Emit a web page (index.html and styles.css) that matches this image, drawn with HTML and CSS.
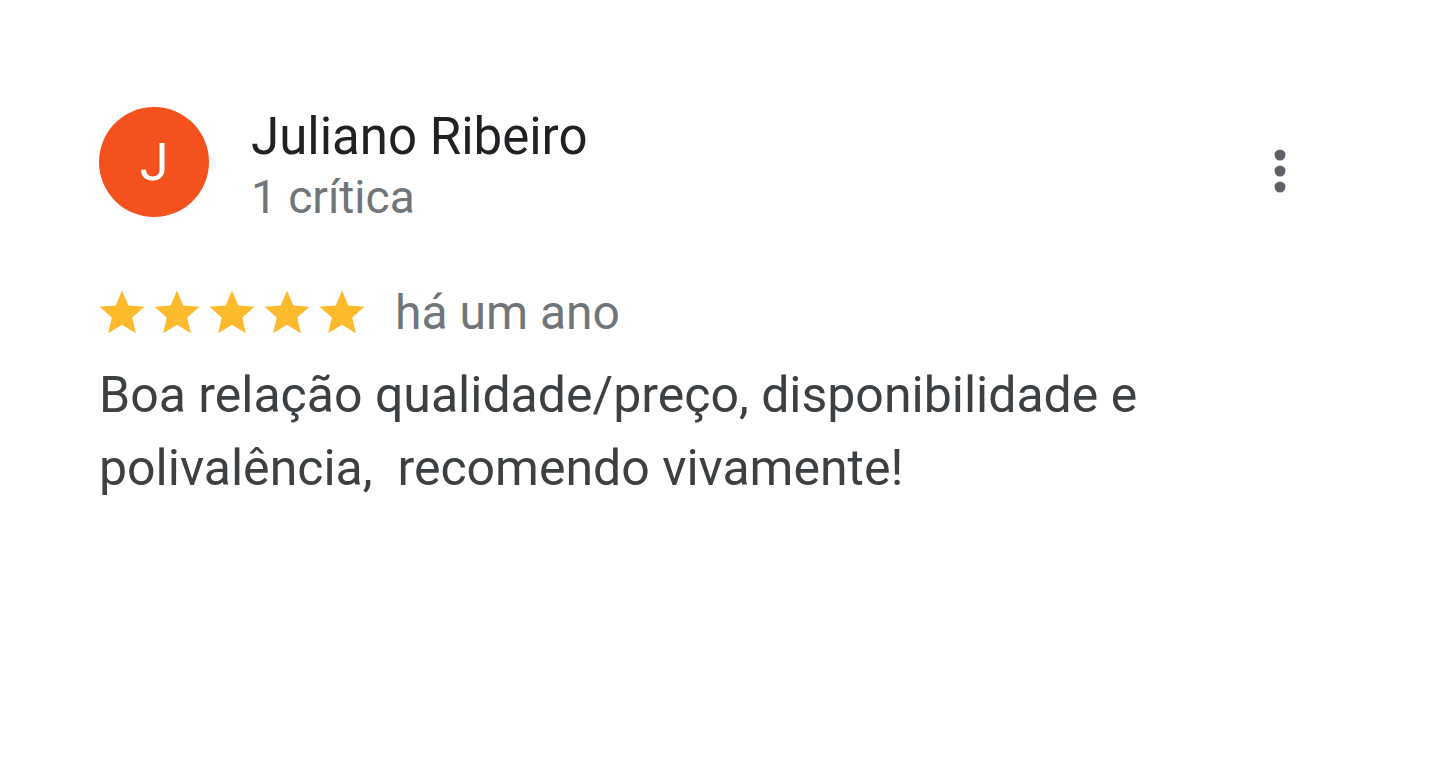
FILE: index.html
```html
<!DOCTYPE html>
<html lang="pt">
<head>
    <meta charset="UTF-8">
    <title>Crítica</title>
    <link rel="stylesheet" href="styles.css">
</head>
<body>
    <div class="review">
        <div class="review-header">
            <div class="avatar">J</div>
            <div class="author">
                <div class="author-name">Juliano Ribeiro</div>
                <div class="author-meta">1 crítica</div>
            </div>
            <button class="more-btn" aria-label="Mais opções">
                <svg width="12" height="44" viewBox="0 0 12 44">
                    <circle cx="6" cy="6" r="5.5"></circle>
                    <circle cx="6" cy="22" r="5.5"></circle>
                    <circle cx="6" cy="38" r="5.5"></circle>
                </svg>
            </button>
        </div>
        <div class="rating-row">
            <div class="stars">
                <svg viewBox="0 0 24 24"><path d="M12 17.27L18.18 21l-1.64-7.03L22 9.24l-7.19-.61L12 2 9.19 8.63 2 9.24l5.46 4.73L5.82 21z"></path></svg>
                <svg viewBox="0 0 24 24"><path d="M12 17.27L18.18 21l-1.64-7.03L22 9.24l-7.19-.61L12 2 9.19 8.63 2 9.24l5.46 4.73L5.82 21z"></path></svg>
                <svg viewBox="0 0 24 24"><path d="M12 17.27L18.18 21l-1.64-7.03L22 9.24l-7.19-.61L12 2 9.19 8.63 2 9.24l5.46 4.73L5.82 21z"></path></svg>
                <svg viewBox="0 0 24 24"><path d="M12 17.27L18.18 21l-1.64-7.03L22 9.24l-7.19-.61L12 2 9.19 8.63 2 9.24l5.46 4.73L5.82 21z"></path></svg>
                <svg viewBox="0 0 24 24"><path d="M12 17.27L18.18 21l-1.64-7.03L22 9.24l-7.19-.61L12 2 9.19 8.63 2 9.24l5.46 4.73L5.82 21z"></path></svg>
            </div>
            <span class="review-date">há um ano</span>
        </div>
        <p class="review-text">Boa relação qualidade/preço, disponibilidade e polivalência,&nbsp; recomendo vivamente!</p>
    </div>
</body>
</html>
```

FILE: styles.css
```css
body {
    margin: 0;
    background: #ffffff;
    font-family: Roboto, 'Liberation Sans', Arial, sans-serif;
    color: #202124;
}

.review {
    width: 1187px;
    padding: 107px 0 0 99px;
}

.review-header {
    display: flex;
    align-items: flex-start;
}

.avatar {
    width: 110px;
    height: 110px;
    border-radius: 50%;
    background: #f4511e;
    color: #ffffff;
    font-size: 52px;
    display: flex;
    align-items: center;
    justify-content: center;
    flex-shrink: 0;
}

.author {
    margin-left: 42px;
    flex: 1;
}

.author-name {
    font-size: 51px;
    line-height: 60px;
    color: #202124;
}

.author-meta {
    font-size: 46px;
    line-height: 60px;
    color: #70757a;
}

.more-btn {
    background: none;
    border: none;
    padding: 0;
    margin: 42px 0 0 0;
    fill: #5f6368;
    cursor: pointer;
}

.more-btn svg {
    display: block;
}

.rating-row {
    display: flex;
    align-items: center;
    margin-top: 57px;
    gap: 26px;
}

.stars {
    display: flex;
    gap: 1px;
    margin-left: -4px;
}

.stars svg {
    width: 54px;
    height: 54px;
    fill: #fdba2c;
}

.review-date {
    font-size: 48px;
    color: #70757a;
}

.review-text {
    margin: 18px 0 0 0;
    width: 1100px;
    font-size: 50px;
    line-height: 73px;
    color: #3c4043;
}
```
